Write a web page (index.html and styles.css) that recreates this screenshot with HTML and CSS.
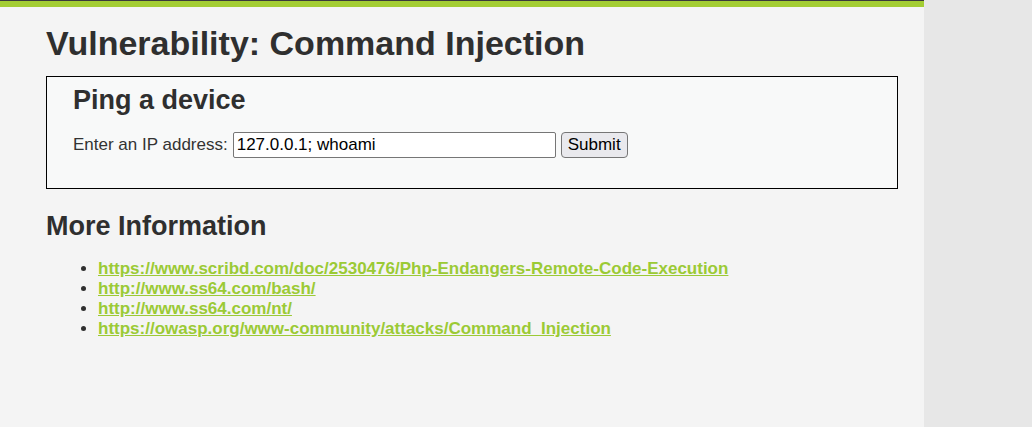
FILE: index.html
```html
<!DOCTYPE html>
<html>
<head>
<meta charset="utf-8">
<link rel="stylesheet" href="styles.css">
</head>
<body>
<div class="topbar"></div>
<div class="layout">
  <div class="main">
    <h1 class="title">Vulnerability: Command Injection</h1>
    <div class="vulnerable_code_area">
      <h2 class="box-title">Ping a device</h2>
      <form class="ping-form">
        <label class="ip-label">Enter an IP address:</label>
        <input class="ip-input" type="text" value="127.0.0.1; whoami">
        <button class="submit-btn" type="button">Submit</button>
      </form>
    </div>
    <h2 class="more-title">More Information</h2>
    <ul class="links">
      <li><a href="#">https://www.scribd.com/doc/2530476/Php-Endangers-Remote-Code-Execution</a></li>
      <li><a href="#">http://www.ss64.com/bash/</a></li>
      <li><a href="#">http://www.ss64.com/nt/</a></li>
      <li><a href="#">https://owasp.org/www-community/attacks/Command_Injection</a></li>
    </ul>
  </div>
  <div class="side"></div>
</div>
</body>
</html>
```
FILE: styles.css
```css
html, body {
  margin: 0;
  padding: 0;
  height: 100%;
}
body {
  font-family: "Liberation Sans", Arial, sans-serif;
  color: #2f2f2f;
  background: #e7e7e7;
  display: flex;
  flex-direction: column;
}
.topbar {
  height: 6px;
  background: #a3cd33;
  border-top: 1px solid #3a3a3a;
  width: 924px;
}
.layout {
  display: flex;
  flex: 1;
}
.main {
  width: 924px;
  background: #f4f4f4;
  padding: 0 0 0 46px;
  box-sizing: border-box;
}
.side {
  flex: 1;
  background: #e7e7e7;
}
.title {
  font-size: 34px;
  font-weight: bold;
  margin: 16px 0 13px 0;
  line-height: 40px;
}
.vulnerable_code_area {
  width: 852px;
  box-sizing: border-box;
  border: 1px solid #000;
  background: #f8f9f9;
  padding: 7px 26px 30px 26px;
}
.box-title {
  font-size: 27px;
  font-weight: bold;
  margin: 0 0 15px 0;
  line-height: 33px;
}
.ping-form {
  display: flex;
  align-items: center;
  font-size: 17px;
}
.ip-label {
  margin-right: 5px;
  color: #333;
}
.ip-input {
  width: 323px;
  height: 26px;
  box-sizing: border-box;
  font-family: "Liberation Sans", Arial, sans-serif;
  font-size: 17px;
  border: 1px solid #767676;
  border-radius: 2px;
  padding: 1px 3px;
  background: #fff;
  color: #000;
  margin: 0 5px 0 0;
}
.submit-btn {
  width: 67px;
  height: 26px;
  font-family: "Liberation Sans", Arial, sans-serif;
  font-size: 17px;
  border: 1px solid #767676;
  border-radius: 4px;
  background: #e9e9ed;
  color: #000;
  padding: 0;
}
.more-title {
  font-size: 27px;
  font-weight: bold;
  margin: 21px 0 16px 0;
  line-height: 33px;
}
.links {
  margin: 0;
  padding-left: 52px;
  font-size: 17px;
  line-height: 20px;
}
.links a {
  color: #9bca35;
  font-weight: bold;
  text-decoration: underline;
}
```
